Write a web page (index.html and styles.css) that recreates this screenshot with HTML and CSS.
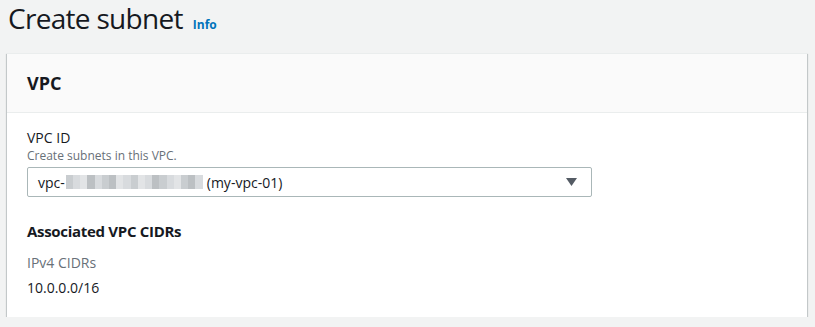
FILE: index.html
```html
<!DOCTYPE html>
<html lang="en">
<head>
    <meta charset="UTF-8">
    <title>Create subnet</title>
    <link rel="stylesheet" href="styles.css">
</head>
<body>
    <!-- Page title -->
    <div class="page-head">
        <h1>Create subnet</h1>
        <a href="#" class="info-link">Info</a>
    </div>

    <!-- VPC container -->
    <div class="card">
        <div class="card-header">
            <h2>VPC</h2>
        </div>
        <div class="card-body">
            <div class="field">
                <label class="field-label">VPC ID</label>
                <p class="field-desc">Create subnets in this VPC.</p>
                <div class="select">
                    <span class="select-value">vpc-<span class="redacted">
                        <i class="g2"></i><i class="g3"></i><i class="g1"></i><i class="g4"></i><i class="g3"></i><i class="g2"></i><i class="g4"></i><i class="g1"></i><i class="g3"></i><i class="g2"></i><i class="g1"></i><i class="g3"></i><i class="g4"></i><i class="g2"></i><i class="g3"></i><i class="g1"></i><i class="g2"></i><i class="g4"></i><i class="g3"></i>
                    </span>(my-vpc-01)</span>
                    <svg class="caret" width="11" height="8" viewBox="0 0 11 8"><path d="M0 0h11L5.5 8z" fill="#545b64"/></svg>
                </div>
            </div>

            <h3 class="sub-title">Associated VPC CIDRs</h3>
            <p class="kv-key">IPv4 CIDRs</p>
            <p class="kv-value">10.0.0.0/16</p>
        </div>
    </div>
</body>
</html>
```
FILE: styles.css
```css
* {
    margin: 0;
    padding: 0;
    box-sizing: border-box;
}

body {
    background-color: #f2f3f3;
    font-family: "Open Sans", Arial, sans-serif;
    color: #16191f;
    padding: 0 8px 0 7px;
}

/* Title */
.page-head {
    display: flex;
    align-items: baseline;
    gap: 10px;
    padding: 0 0 0 1px;
    height: 53px;
}

.page-head h1 {
    font-size: 28px;
    font-weight: 400;
    line-height: 36px;
    letter-spacing: -0.7px;
}

.info-link {
    color: #0073bb;
    font-size: 12px;
    font-weight: 700;
    text-decoration: none;
}

/* Card */
.card {
    background-color: #fff;
    box-shadow: 0 1px 1px 0 rgba(0, 28, 36, 0.3), 1px 1px 1px 0 rgba(0, 28, 36, 0.15), -1px 1px 1px 0 rgba(0, 28, 36, 0.15);
    border-top: 1px solid #eaeded;
}

.card-header {
    background-color: #fafafa;
    border-bottom: 1px solid #eaeded;
    height: 59px;
    display: flex;
    align-items: center;
    padding: 0 20px;
}

.card-header h2 {
    font-size: 18px;
    font-weight: 700;
}

.card-body {
    padding: 15px 20px 19px;
}

.field-label {
    display: block;
    font-size: 14px;
    line-height: 20px;
}

.field-desc {
    font-size: 12px;
    line-height: 16px;
    color: #687078;
}

.select {
    margin-top: 3px;
    width: 565px;
    height: 30px;
    border: 1px solid #aab7b8;
    border-radius: 2px;
    display: flex;
    align-items: center;
    justify-content: space-between;
    padding: 0 14px 0 10px;
}

.select-value {
    font-size: 14px;
    display: flex;
    align-items: center;
}

.redacted {
    display: flex;
    width: 137px;
    height: 14px;
    margin: 0 4px 0 1px;
}

.redacted i {
    flex: 1;
}

.g1 { background-color: #e2e4e6; }
.g2 { background-color: #c9cdd0; }
.g3 { background-color: #d8dbde; }
.g4 { background-color: #bcc0c3; }

.caret {
    display: block;
}

.sub-title {
    margin-top: 23px;
    font-size: 15px;
    font-weight: 700;
    line-height: 22px;
    letter-spacing: -0.3px;
}

.kv-key {
    margin-top: 11px;
    font-size: 14px;
    line-height: 20px;
    color: #687078;
}

.kv-value {
    margin-top: 5px;
    font-size: 14px;
    line-height: 20px;
}
```
